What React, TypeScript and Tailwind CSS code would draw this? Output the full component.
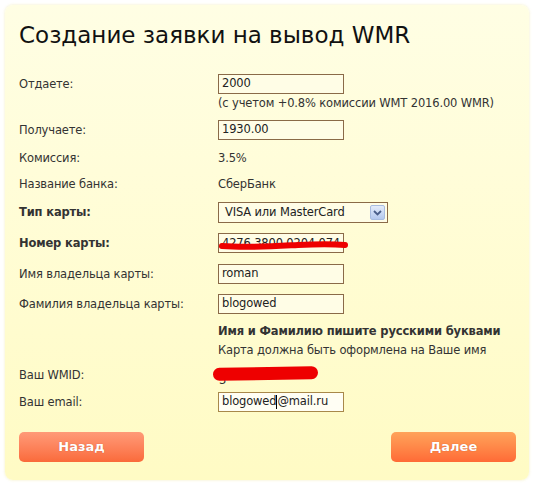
import React from "react";

const font = { fontFamily: '"DejaVu Sans", Verdana, sans-serif' };

function Row({
  label,
  bold,
  children,
  className = "",
}: {
  label: string;
  bold?: boolean;
  children?: React.ReactNode;
  className?: string;
}) {
  return (
    <div className={"grid grid-cols-[199px_1fr] " + className}>
      <div className={"leading-[20px] text-[#333] " + (bold ? "font-bold" : "")}>{label}</div>
      <div>{children}</div>
    </div>
  );
}

function Field({ value, focused, w = "w-[126px]" }: { value: string; focused?: boolean; w?: string }) {
  return (
    <div
      className={
        "h-[20px] border flex items-center pl-[3px] leading-none text-[#222] bg-[#fffde6] " +
        w +
        " " +
        (focused ? "border-[#a8884a]" : "border-[#8a6a48]")
      }
    >
      {value}
    </div>
  );
}

export default function App() {
  return (
    <div className="w-[535px] h-[488px] bg-white pt-[5px] pl-[5px]" style={font}>
      <div className="w-[524px] h-[475px] rounded-[8px] bg-gradient-to-b from-[#fffee4] to-[#fffbc4] pl-[14px] pt-[15px] text-[11.5px] tracking-[-0.15px] shadow-[0_0_3px_rgba(240,235,180,0.8)]">
        <h1 className="text-[23px] leading-[30px] tracking-normal text-[#111] font-normal">Создание заявки на вывод WMR</h1>

        <Row label="Отдаете:" className="mt-[24px]">
          <Field value="2000" />
          <div className="leading-[18px] text-[#333]">(с учетом +0.8% комиссии WMT 2016.00 WMR)</div>
        </Row>

        <Row label="Получаете:" className="mt-[8px]">
          <Field value="1930.00" />
        </Row>

        <Row label="Комиссия:" className="mt-[8px]">
          <div className="leading-[20px] text-[#333]">3.5%</div>
        </Row>

        <Row label="Название банка:" className="mt-[6px]">
          <div className="leading-[20px] text-[#333]">СберБанк</div>
        </Row>

        <Row label="Тип карты:" bold className="mt-[8px]">
          <div className="h-[21px] w-[170px] border border-[#8a6a48] bg-[#fffde6] flex items-center justify-between pl-[6px] pr-[2px] text-[#222]">
            <span>VISA или MasterCard</span>
            <span className="w-[15px] h-[15px] rounded-[2px] bg-gradient-to-b from-[#e4ecfa] to-[#b4c8ee] border border-[#a8bce0] flex items-center justify-center">
              <svg width="9" height="6" viewBox="0 0 9 6">
                <path d="M1 1 L4.5 4.5 L8 1" stroke="#4a5e8a" strokeWidth="1.8" fill="none" />
              </svg>
            </span>
          </div>
        </Row>

        <Row label="Номер карты:" bold className="mt-[10px]">
          <div className="relative">
            <div className="h-[20px] w-[126px] border border-[#8a6a48] bg-[#fffde6] overflow-hidden pl-[3px] text-[#222] leading-[18px] whitespace-nowrap">
              4276 3800 0204 074
            </div>
            <svg className="absolute left-[0px] top-[5px]" width="132" height="14" viewBox="0 0 132 14">
              <path d="M4 8 C 30 10, 60 8, 80 7 C 100 6, 115 6, 127 7" stroke="#ee0000" strokeWidth="6" strokeLinecap="round" fill="none" />
            </svg>
          </div>
        </Row>

        <Row label="Имя владельца карты:" className="mt-[11px]">
          <Field value="roman" />
        </Row>

        <Row label="Фамилия владельца карты:" className="mt-[10px]">
          <Field value="blogowed" />
        </Row>

        <Row label="" className="mt-[8px]">
          <div className="leading-[19px] font-bold text-[#333]">Имя и Фамилию пишите русскими буквами</div>
          <div className="leading-[19px] text-[#333]">Карта должна быть оформлена на Ваше имя</div>
        </Row>

        <Row label="Ваш WMID:" className="mt-[5px]">
          <div className="relative h-[20px]">
            <span className="absolute left-[1px] top-[7px] text-[#333]">3</span>
            <div className="absolute left-[-5px] top-[2px] w-[105px] h-[13px] rounded-full bg-[#ee0000] -rotate-1" />
          </div>
        </Row>

        <Row label="Ваш email:" className="mt-[7px]">
          <div className="h-[20px] w-[126px] border border-[#a8884a] bg-[#fffef4] flex items-center pl-[3px] text-[#222]">
            <span>blogowed</span>
            <span className="inline-block w-px h-[14px] bg-black" />
            <span>@mail.ru</span>
          </div>
        </Row>

        <div className="mt-[20px] flex justify-between pr-[13px]">
          <button className="w-[125px] h-[30px] rounded-[5px] bg-gradient-to-b from-[#ff9a78] to-[#fa6a3a] text-white font-bold text-[13px] tracking-normal [text-shadow:0_0_1px_rgba(150,50,20,0.6)]">
            Назад
          </button>
          <button className="w-[125px] h-[30px] rounded-[5px] bg-gradient-to-b from-[#ffa35a] to-[#ff6a36] text-white font-bold text-[13px] tracking-normal [text-shadow:0_0_1px_rgba(150,50,20,0.6)]">
            Далее
          </button>
        </div>
      </div>
    </div>
  );
}
